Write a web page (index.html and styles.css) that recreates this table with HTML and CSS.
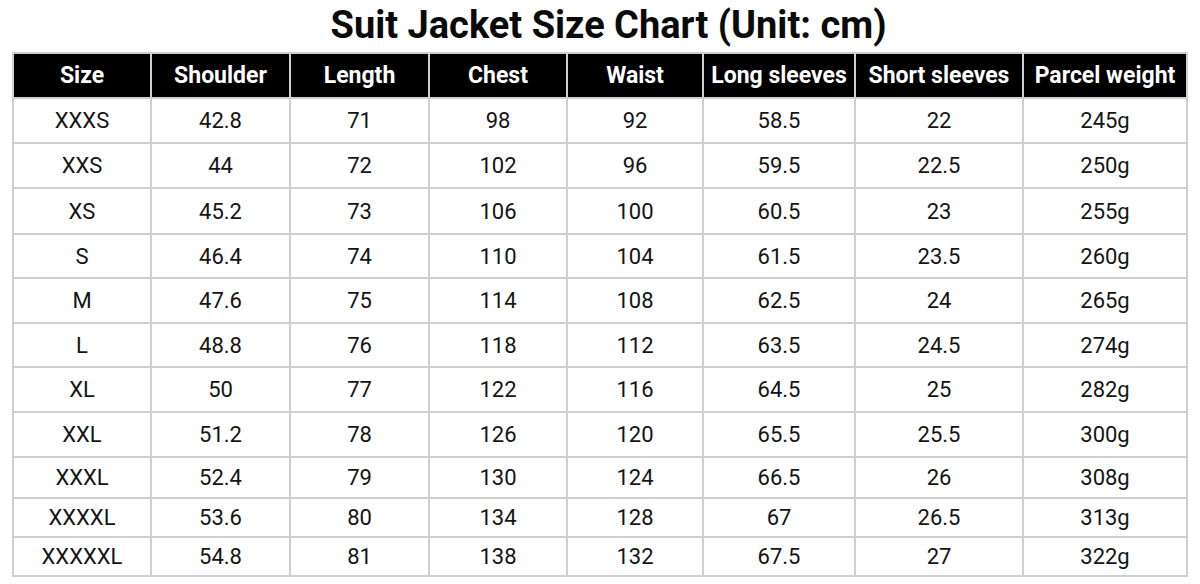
FILE: index.html
```html
<!DOCTYPE html>
<html>
<head>
<meta charset="utf-8">
<link rel="stylesheet" href="styles.css">
</head>
<body>
<div class="page">
  <h1 class="title">Suit Jacket Size Chart (Unit: cm)</h1>
  <table class="chart">
    <colgroup>
      <col class="c1"><col class="c2"><col class="c3"><col class="c4"><col class="c5"><col class="c6"><col class="c7"><col class="c8">
    </colgroup>
    <thead>
      <tr><th>Size</th><th>Shoulder</th><th>Length</th><th>Chest</th><th>Waist</th><th>Long sleeves</th><th>Short sleeves</th><th>Parcel weight</th></tr>
    </thead>
    <tbody>
      <tr><td>XXXS</td><td>42.8</td><td>71</td><td>98</td><td>92</td><td>58.5</td><td>22</td><td>245g</td></tr>
      <tr><td>XXS</td><td>44</td><td>72</td><td>102</td><td>96</td><td>59.5</td><td>22.5</td><td>250g</td></tr>
      <tr class="r46"><td>XS</td><td>45.2</td><td>73</td><td>106</td><td>100</td><td>60.5</td><td>23</td><td>255g</td></tr>
      <tr class="r44"><td>S</td><td>46.4</td><td>74</td><td>110</td><td>104</td><td>61.5</td><td>23.5</td><td>260g</td></tr>
      <tr><td>M</td><td>47.6</td><td>75</td><td>114</td><td>108</td><td>62.5</td><td>24</td><td>265g</td></tr>
      <tr class="r44"><td>L</td><td>48.8</td><td>76</td><td>118</td><td>112</td><td>63.5</td><td>24.5</td><td>274g</td></tr>
      <tr><td>XL</td><td>50</td><td>77</td><td>122</td><td>116</td><td>64.5</td><td>25</td><td>282g</td></tr>
      <tr><td>XXL</td><td>51.2</td><td>78</td><td>126</td><td>120</td><td>65.5</td><td>25.5</td><td>300g</td></tr>
      <tr class="r41"><td>XXXL</td><td>52.4</td><td>79</td><td>130</td><td>124</td><td>66.5</td><td>26</td><td>308g</td></tr>
      <tr class="r39"><td>XXXXL</td><td>53.6</td><td>80</td><td>134</td><td>128</td><td>67</td><td>26.5</td><td>313g</td></tr>
      <tr class="r39"><td>XXXXXL</td><td>54.8</td><td>81</td><td>138</td><td>132</td><td>67.5</td><td>27</td><td>322g</td></tr>
    </tbody>
  </table>
</div>
</body>
</html>
```

FILE: styles.css
```css
html, body {
  margin: 0;
  padding: 0;
  background: #ffffff;
}
body {
  font-family: Roboto, "Liberation Sans", sans-serif;
  color: #111111;
}
.page {
  width: 1200px;
  height: 584px;
  padding: 0 0 0 12px;
  box-sizing: border-box;
  overflow: hidden;
}
.title {
  margin: 0;
  height: 52px;
  line-height: 50px;
  width: 1173px;
  padding-left: 20px;
  box-sizing: border-box;
  text-align: center;
  font-size: 38px;
  font-weight: 700;
  color: #0a0a0a;
  letter-spacing: 0;
}
.chart {
  border-collapse: collapse;
  table-layout: fixed;
  width: 1174px;
}
.c1 { width: 138px; }
.c2 { width: 139px; }
.c3 { width: 139px; }
.c4 { width: 138px; }
.c5 { width: 136px; }
.c6 { width: 152px; }
.c7 { width: 168px; }
.c8 { width: 164px; }
.chart th, .chart td {
  border: 2px solid #cfcfcf;
  text-align: center;
  padding: 0;
  white-space: nowrap;
}
.chart th {
  background: #000000;
  color: #ffffff;
  font-weight: 700;
  font-size: 23px;
  height: 43px;
}
.chart td {
  font-size: 22px;
  font-weight: 400;
  height: 43px;
  color: #141414;
}
.chart tr.r46 td { height: 44px; }
.chart tr.r44 td { height: 42px; }
.chart tr.r41 td { height: 39px; }
.chart tr.r39 td { height: 37px; }
```
